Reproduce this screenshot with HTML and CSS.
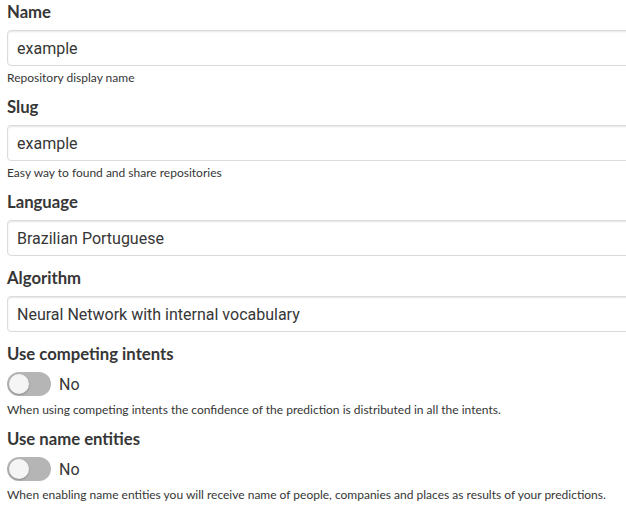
FILE: index.html
```html
<!DOCTYPE html>
<html lang="en">
<head>
<meta charset="utf-8">
<title>Repository settings</title>
<link rel="stylesheet" href="styles.css">
</head>
<body>
<form class="form">
  <div class="field">
    <label class="label">Name</label>
    <input class="input" type="text" value="example">
    <p class="help">Repository display name</p>
  </div>
  <div class="field">
    <label class="label">Slug</label>
    <input class="input" type="text" value="example">
    <p class="help">Easy way to found and share repositories</p>
  </div>
  <div class="field">
    <label class="label">Language</label>
    <div class="input select-box">Brazilian Portuguese</div>
  </div>
  <div class="field">
    <label class="label">Algorithm</label>
    <div class="input select-box">Neural Network with internal vocabulary</div>
  </div>
  <div class="field">
    <label class="label">Use competing intents</label>
    <div class="switch-row">
      <span class="switch"><span class="knob"></span></span>
      <span class="switch-text">No</span>
    </div>
    <p class="help">When using competing intents the confidence of the prediction is distributed in all the intents.</p>
  </div>
  <div class="field">
    <label class="label">Use name entities</label>
    <div class="switch-row">
      <span class="switch"><span class="knob"></span></span>
      <span class="switch-text">No</span>
    </div>
    <p class="help">When enabling name entities you will receive name of people, companies and places as results of your predictions.</p>
  </div>
</form>
</body>
</html>
```

FILE: styles.css
```css
html, body {
  margin: 0;
  padding: 0;
  background: #ffffff;
  overflow: hidden;
}
body {
  font-family: Lato, "Open Sans", sans-serif;
  color: #363636;
}
.form {
  width: 680px;
  padding: 0 0 0 7px;
}
.field {
  display: flex;
  flex-direction: column;
  margin-bottom: 10px;
}
.label {
  display: block;
  font-weight: 700;
  font-size: 16.7px;
  line-height: 24px;
  color: #363636;
  margin-bottom: 6px;
}
.input {
  box-sizing: border-box;
  height: 36px;
  width: 100%;
  border: 1px solid #dbdbdb;
  border-radius: 4px;
  box-shadow: inset 0 1px 2px rgba(10, 10, 10, 0.1);
  padding: 0 9px;
  font-family: Roboto, "Liberation Sans", sans-serif;
  font-size: 16px;
  color: #363636;
  background: #fff;
  outline: none;
  margin: 0;
}
.select-box {
  display: flex;
  align-items: center;
}
.help {
  margin: 4px 0 0;
  font-size: 12px;
  line-height: 15px;
  color: #363636;
}
.switch-row {
  display: flex;
  align-items: center;
  gap: 8px;
  height: 24px;
  margin-bottom: 2px;
}
.switch {
  position: relative;
  display: block;
  width: 44px;
  height: 24px;
  border-radius: 12px;
  background: #b5b5b5;
}
.knob {
  position: absolute;
  top: 2px;
  left: 2px;
  width: 20px;
  height: 20px;
  border-radius: 50%;
  background: #f5f5f5;
  box-shadow: 0 1px 2px rgba(10, 10, 10, 0.25);
}
.switch-text {
  font-family: Roboto, "Liberation Sans", sans-serif;
  font-size: 16px;
  color: #363636;
}
```
